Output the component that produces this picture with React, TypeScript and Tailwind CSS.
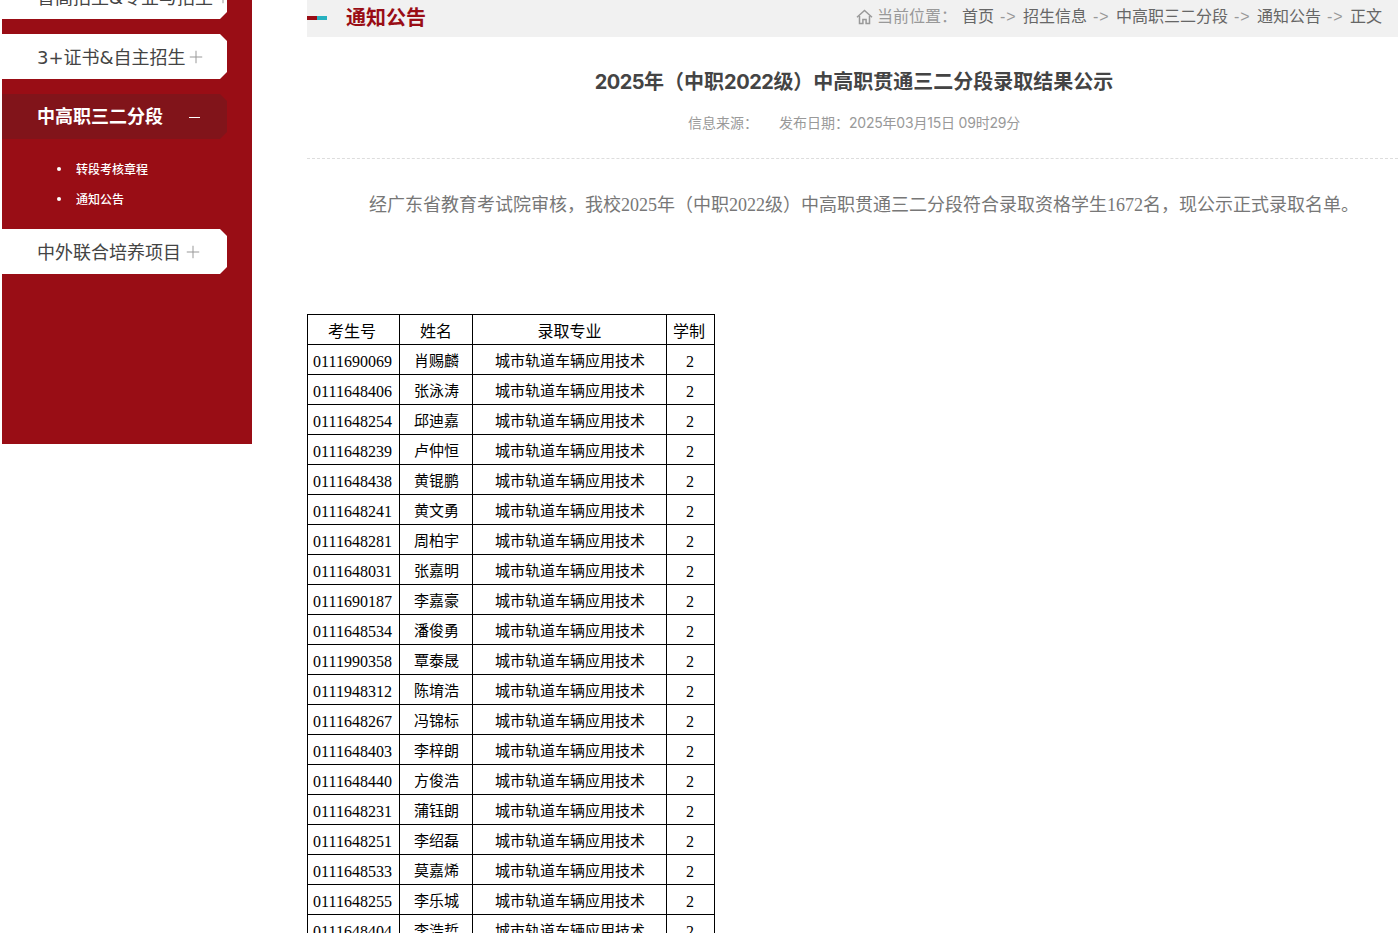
import React from 'react';
import { Plus } from 'lucide-react';

const FONT = "font-['Liberation_Sans','Noto_Sans_CJK_SC',sans-serif]";
const TABLE_FONT = "font-['Liberation_Serif','Noto_Sans_CJK_SC',serif]";

const students = [
  ['0111690069', '肖赐麟'],
  ['0111648406', '张泳涛'],
  ['0111648254', '邱迪嘉'],
  ['0111648239', '卢仲恒'],
  ['0111648438', '黄锟鹏'],
  ['0111648241', '黄文勇'],
  ['0111648281', '周柏宇'],
  ['0111648031', '张嘉明'],
  ['0111690187', '李嘉豪'],
  ['0111648534', '潘俊勇'],
  ['0111990358', '覃泰晟'],
  ['0111948312', '陈堉浩'],
  ['0111648267', '冯锦标'],
  ['0111648403', '李梓朗'],
  ['0111648440', '方俊浩'],
  ['0111648231', '蒲钰朗'],
  ['0111648251', '李绍磊'],
  ['0111648533', '莫嘉烯'],
  ['0111648255', '李乐城'],
  ['0111648404', '李浩哲'],
];

const crumbs = ['招生信息', '中高职三二分段', '通知公告', '正文'];

const MenuItem: React.FC<{ label: string }> = ({ label }) => (
  <div className="flex h-[45px] w-[225px] items-center bg-white pr-[24px] pl-[35px] font-['DejaVu_Sans','Noto_Sans_CJK_SC',sans-serif] text-[18px] whitespace-nowrap text-[#444] [clip-path:polygon(0_0,218px_0,225px_7px,225px_38px,218px_45px,0_45px)]">
    <span className="pt-[2px]">{label}</span>
    <Plus className="ml-auto h-[20px] w-[20px] shrink-0 text-[#999]" strokeWidth={1.2} />
  </div>
);

const SubItem: React.FC<{ label: string }> = ({ label }) => (
  <li className="flex h-[30px] items-center pl-[55px]">
    <span className="mr-[15px] h-[4px] w-[4px] rounded-full bg-white" />
    <span className="pt-[1px]">{label}</span>
  </li>
);

const Sidebar = () => (
  <aside className="ml-[2px] h-[444px] w-[250px] shrink-0 bg-[#990d15]">
    <div className="mt-[-26px] flex flex-col">
      <MenuItem label="普高招生&专业与招生" />
      <div className="mt-[15px]">
        <MenuItem label="3+证书&自主招生" />
      </div>
      <div className="mt-[15px] flex h-[45px] w-[225px] items-center bg-[#81141a] pt-[1px] pl-[35px] text-[18px] font-bold text-white [clip-path:polygon(0_0,218px_0,225px_7px,225px_38px,218px_45px,0_45px)]">
        <span>中高职三二分段</span>
        <span className="ml-[26px] h-px w-[11px] bg-white" />
      </div>
      <ul className="py-[15px] text-[12px] font-medium text-white">
        <SubItem label="转段考核章程" />
        <SubItem label="通知公告" />
      </ul>
      <MenuItem label="中外联合培养项目" />
    </div>
  </aside>
);

const HomeIcon = () => (
  <svg viewBox="0 0 17 16" className="mr-[4px] h-[16px] w-[17px]" fill="none" stroke="#999" strokeWidth="1.5">
    <path d="M1 8.2 8.5 1.5 16 8.2" />
    <path d="M3.5 7v7.5h3.4v-4h3.2v4h3.4V7" />
  </svg>
);

const Breadcrumb = () => (
  <div className="flex h-[37px] items-start justify-between bg-[#f1f1f1] pr-[16px]">
    <div className="flex h-[35px] items-center">
      <span className="h-[4px] w-[10px] bg-[#990d15]" />
      <span className="h-[4px] w-[10px] bg-[#27b1bf]" />
      <h2 className="ml-[19px] text-[20px] font-bold text-[#990d15]">通知公告</h2>
    </div>
    <div className="flex h-[33px] items-center text-[16px] text-[#666]">
      <HomeIcon />
      <span className="w-[85px] text-[#999]">当前位置：</span>
      <span>首页</span>
      {crumbs.map(c => (
        <React.Fragment key={c}>
          <span className="w-[29px] pl-[6px] tracking-[1px] text-[#999]">-&gt;</span>
          <span>{c}</span>
        </React.Fragment>
      ))}
    </div>
  </div>
);

const ResultTable = () => (
  <table className={`mt-[97px] w-[408px] table-fixed border-collapse text-[16px] text-black ${TABLE_FONT}`}>
    <colgroup>
      <col className="w-[92px]" />
      <col className="w-[73px]" />
      <col className="w-[194px]" />
      <col className="w-[48px]" />
    </colgroup>
    <thead>
      <tr className="h-[30px]">
        {['考生号', '姓名', '录取专业', '学制'].map(h => (
          <th key={h} className="border border-black p-0 pt-[4px] text-center font-normal first:pr-[3px] last:pr-[3px]">
            {h}
          </th>
        ))}
      </tr>
    </thead>
    <tbody>
      {students.map(([id, name]) => (
        <tr key={id} className="h-[30px] text-[15px]">
          <td className="border border-black p-0 pt-[4px] pr-[2px] text-center text-[16px]">{id}</td>
          <td className="border border-black p-0 pt-[4px] pl-[1px] text-center">{name}</td>
          <td className="border border-black p-0 pt-[4px] pl-[1px] text-center">城市轨道车辆应用技术</td>
          <td className="border border-black p-0 pt-[4px] pr-[1px] text-center text-[16px]">2</td>
        </tr>
      ))}
    </tbody>
  </table>
);

export default function App() {
  return (
    <div className={`flex h-[933px] overflow-hidden bg-white ${FONT}`}>
      <Sidebar />
      <main className="ml-[55px] w-[1091px] shrink-0">
        <Breadcrumb />
        <h1 className="mt-[30px] pl-[3px] text-center font-['Inter','Noto_Sans_CJK_SC',sans-serif] text-[20px] leading-[30px] font-bold text-[#444]">
          <span className="tracking-[-0.5px]">2025</span>年（中职<span className="tracking-[-0.5px]">2022</span>级）中高职贯通三二分段录取结果公示
        </h1>
        <div className="mt-[16px] flex justify-center pb-[25px] pl-[3px] text-[14px] leading-[20px] text-[#999]">
          <span>信息来源：</span>
          <span className="ml-[21px]">
            发布日期：<span className="font-['Inter','Noto_Sans_CJK_SC',sans-serif] tracking-[-0.2px]">2025年03月15日 09时29分</span>
          </span>
        </div>
        <div className="border-t border-dashed border-[#ddd]" />
        <p className={`mt-[34px] pl-[62px] text-[18px] leading-[24px] whitespace-nowrap text-[#777] ${TABLE_FONT}`}>
          经广东省教育考试院审核，我校2025年（中职2022级）中高职贯通三二分段符合录取资格学生1672名，现公示正式录取名单。
        </p>
        <ResultTable />
      </main>
    </div>
  );
}
